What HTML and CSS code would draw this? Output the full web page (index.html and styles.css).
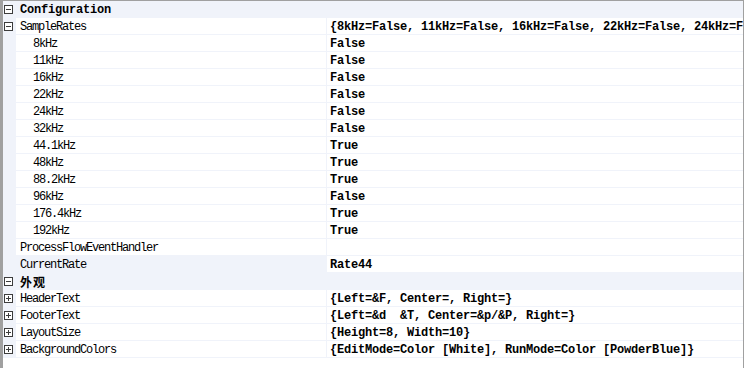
FILE: index.html
```html
<!DOCTYPE html>
<html lang="zh-CN">
<head>
    <meta charset="UTF-8">
    <link rel="stylesheet" href="styles.css">
    <title>PropertyGrid</title>
</head>
<body>

<div class="grid">

    <div class="row cat"><span class="margin"><span class="box"></span></span><span class="cat-label">Configuration</span></div>

    <div class="row"><span class="margin"><span class="box"></span></span><span class="name">SampleRates</span><span class="value">{8kHz=False, 11kHz=False, 16kHz=False, 22kHz=False, 24kHz=False, 32kHz=False, 44.1kHz=True}</span></div>
    <div class="row"><span class="margin"></span><span class="name sub">8kHz</span><span class="value">False</span></div>
    <div class="row"><span class="margin"></span><span class="name sub">11kHz</span><span class="value">False</span></div>
    <div class="row"><span class="margin"></span><span class="name sub">16kHz</span><span class="value">False</span></div>
    <div class="row"><span class="margin"></span><span class="name sub">22kHz</span><span class="value">False</span></div>
    <div class="row"><span class="margin"></span><span class="name sub">24kHz</span><span class="value">False</span></div>
    <div class="row"><span class="margin"></span><span class="name sub">32kHz</span><span class="value">False</span></div>
    <div class="row"><span class="margin"></span><span class="name sub">44.1kHz</span><span class="value">True</span></div>
    <div class="row"><span class="margin"></span><span class="name sub">48kHz</span><span class="value">True</span></div>
    <div class="row"><span class="margin"></span><span class="name sub">88.2kHz</span><span class="value">True</span></div>
    <div class="row"><span class="margin"></span><span class="name sub">96kHz</span><span class="value">False</span></div>
    <div class="row"><span class="margin"></span><span class="name sub">176.4kHz</span><span class="value">True</span></div>
    <div class="row"><span class="margin"></span><span class="name sub">192kHz</span><span class="value">True</span></div>
    <div class="row"><span class="margin"></span><span class="name">ProcessFlowEventHandler</span><span class="value"></span></div>
    <div class="row"><span class="margin"></span><span class="name selected">CurrentRate</span><span class="value">Rate44</span></div>

    <div class="row cat"><span class="margin"><span class="box"></span></span><span class="cat-label cjk">外观</span></div>

    <div class="row"><span class="margin"><span class="box plus"></span></span><span class="name">HeaderText</span><span class="value">{Left=&amp;F, Center=, Right=}</span></div>
    <div class="row"><span class="margin"><span class="box plus"></span></span><span class="name">FooterText</span><span class="value">{Left=&amp;d  &amp;T, Center=&amp;p/&amp;P, Right=}</span></div>
    <div class="row"><span class="margin"><span class="box plus"></span></span><span class="name">LayoutSize</span><span class="value">{Height=8, Width=10}</span></div>
    <div class="row"><span class="margin"><span class="box plus"></span></span><span class="name">BackgroundColors</span><span class="value">{EditMode=Color [White], RunMode=Color [PowderBlue]}</span></div>

</div>

</body>
</html>
```

FILE: styles.css
```css
body {
    margin: 0;
    background-color: white;
    font-family: "Liberation Mono", "Noto Sans CJK SC", monospace;
    font-size: 12px;
    color: black;
}

.grid {
    width: 744px;
    height: 368px;
    box-sizing: border-box;
    border-left: 3px solid #a0a0a0;
    border-top: 1px solid #a0a0a0;
    border-right: 1px solid #a0a0a0;
    overflow: hidden;
}

.row {
    display: flex;
    height: 17px;
    box-sizing: border-box;
    border-bottom: 1px solid #f0f3fa;
    line-height: 18px;
}

.cat {
    background-color: #f0f3fa;
}

.margin {
    width: 13px;
    flex-shrink: 0;
    background-color: #f0f3fa;
    display: flex;
    align-items: center;
    padding-left: 1px;
    box-sizing: border-box;
}

.box {
    width: 9px;
    height: 9px;
    box-sizing: border-box;
    border: 1px solid #3c3c3c;
    position: relative;
    background-color: white;
}

.box::before {
    content: "";
    position: absolute;
    left: 1px;
    top: 3px;
    width: 5px;
    height: 1px;
    background-color: #3c3c3c;
}

.box.plus::after {
    content: "";
    position: absolute;
    left: 3px;
    top: 1px;
    width: 1px;
    height: 5px;
    background-color: #3c3c3c;
}

.cat-label {
    padding-left: 4px;
    font-weight: bold;
    letter-spacing: -0.2px;
}

.cat-label.cjk {
    font-family: "Noto Sans CJK SC", sans-serif;
    font-size: 12px;
    letter-spacing: 1px;
}

.name {
    width: 310px;
    flex-shrink: 0;
    padding-left: 4px;
    box-sizing: border-box;
    letter-spacing: -1.2px;
    white-space: pre;
    overflow: hidden;
}

.name.sub {
    padding-left: 17px;
}

.name.selected {
    background-color: #f0f3fa;
}

.value {
    flex: 1;
    border-left: 1px solid #f0f3fa;
    padding-left: 3px;
    font-weight: bold;
    letter-spacing: -0.2px;
    white-space: pre;
    overflow: hidden;
}
```
